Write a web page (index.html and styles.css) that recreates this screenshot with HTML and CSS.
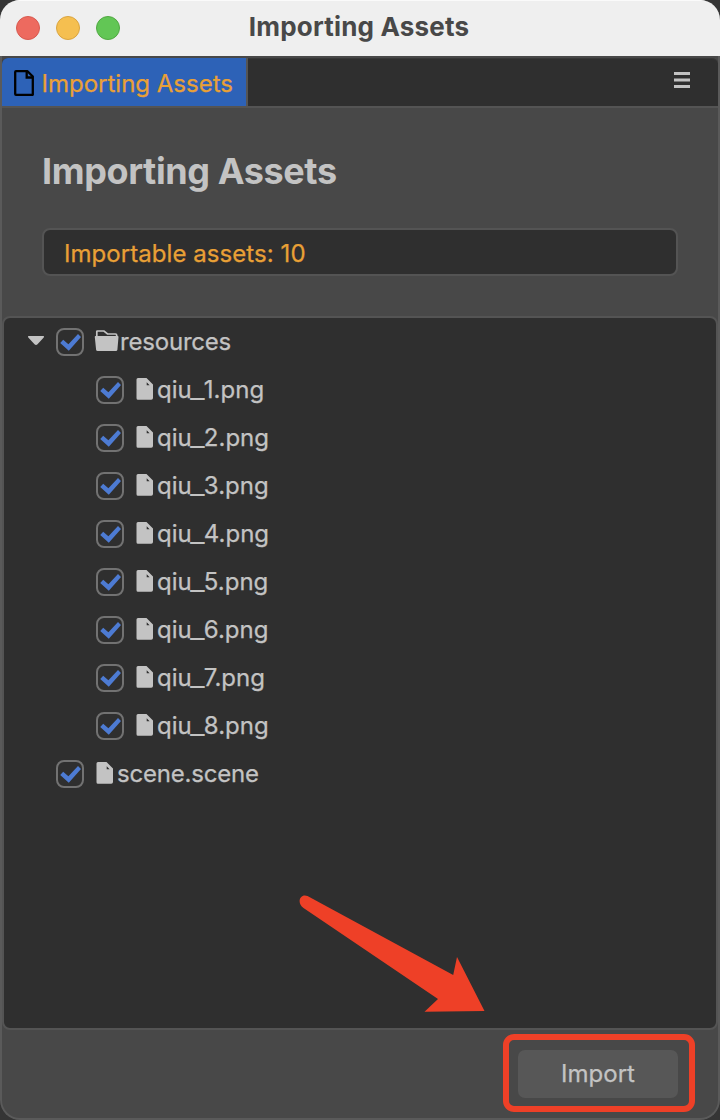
FILE: index.html
```html
<!DOCTYPE html>
<html lang="en">
<head>
<meta charset="utf-8">
<title>Importing Assets</title>
<link rel="stylesheet" href="styles.css">
</head>
<body>
<svg class="defs" aria-hidden="true">
  <symbol id="check" viewBox="0 0 28 28"><rect x="1" y="1" width="26" height="26" rx="7" fill="none" stroke="#727272" stroke-width="2"/><path d="M4.200 14.900 7.200 11.800 12.400 16.300 22 6 25 9 12.800 22.700Z" fill="#4d7bd3"/></symbol>
  <symbol id="file" viewBox="0 0 17 22"><path fill="#c3c3c3" fill-rule="evenodd" d="M2 0H10.500L17 6.500V20Q17 21.700 15.300 21.700H2Q.5 21.700 .5 20.200V1.500Q.5 0 2 0ZM10.700 4.300V7.200H13.600Z"/></symbol>
</svg>
<main class="window">
  <header class="titlebar">
    <div class="lights"><i class="light red"></i><i class="light yellow"></i><i class="light green"></i></div>
    <span class="title">Importing Assets</span>
  </header>
  <div class="body">
    <nav class="tabs">
      <div class="tab">
        <svg class="tab-icon" width="22" height="28" viewBox="0 0 22 28" fill="none" stroke="#000" stroke-width="2.300"><path d="M3 2.200H14.500L19.800 7.500V25.800H3Q2.200 25.800 2.200 25V3Q2.200 2.200 3 2.200Z" stroke-linejoin="round"/><path d="M13.700 2.500V8.500H19.500"/></svg>
        <span class="tab-label">Importing Assets</span>
      </div>
      <svg class="menu" width="16" height="16" viewBox="0 0 16 16" fill="#c3c3c3"><path d="M0 0H16V3H0ZM0 6.500H16V9.500H0ZM0 13H16V16H0Z"/></svg>
    </nav>
    <section class="summary">
      <h1>Importing Assets</h1>
      <div class="count">Importable assets: 10</div>
    </section>
    <ul class="tree">
      <li class="row root">
        <svg class="caret" width="16" height="10" viewBox="0 0 16 10"><path d="M.5 0H15.500Q16.500 .7 15.500 1.700L9.500 8.200Q8 9.600 6.500 8.200L.5 1.700Q-.5 .7 .5 0Z" fill="#c3c3c3"/></svg>
        <svg class="check"><use href="#check"/></svg>
        <svg class="folder" width="24" height="22" viewBox="0 0 24 22"><path d="M1.800 8V1.500Q1.800 1 2.300 1H9L12.500 4H20.500Q21.700 4 21.700 5.200V8" fill="none" stroke="#c3c3c3" stroke-width="1.700"/><path d="M.5 6H22.700Q23.600 6 23.500 7.100L22.400 19.700Q22.200 21 20.900 21H2.600Q1.300 21 1.100 19.700L-.2 7.100Q-.3 6 .5 6Z" fill="#c3c3c3"/></svg>
        <span class="name folder-name">resources</span>
      </li>
      <li class="row child"><svg class="check"><use href="#check"/></svg><svg class="file"><use href="#file"/></svg><span class="name">qiu<span class="underscore">_</span>1.png</span></li>
      <li class="row child"><svg class="check"><use href="#check"/></svg><svg class="file"><use href="#file"/></svg><span class="name">qiu<span class="underscore">_</span>2.png</span></li>
      <li class="row child"><svg class="check"><use href="#check"/></svg><svg class="file"><use href="#file"/></svg><span class="name">qiu<span class="underscore">_</span>3.png</span></li>
      <li class="row child"><svg class="check"><use href="#check"/></svg><svg class="file"><use href="#file"/></svg><span class="name">qiu<span class="underscore">_</span>4.png</span></li>
      <li class="row child"><svg class="check"><use href="#check"/></svg><svg class="file"><use href="#file"/></svg><span class="name">qiu<span class="underscore">_</span>5.png</span></li>
      <li class="row child"><svg class="check"><use href="#check"/></svg><svg class="file"><use href="#file"/></svg><span class="name">qiu<span class="underscore">_</span>6.png</span></li>
      <li class="row child"><svg class="check"><use href="#check"/></svg><svg class="file"><use href="#file"/></svg><span class="name">qiu<span class="underscore">_</span>7.png</span></li>
      <li class="row child"><svg class="check"><use href="#check"/></svg><svg class="file"><use href="#file"/></svg><span class="name">qiu<span class="underscore">_</span>8.png</span></li>
      <li class="row leaf"><svg class="check"><use href="#check"/></svg><svg class="file"><use href="#file"/></svg><span class="name scene">scene.scene</span></li>
    </ul>
    <footer class="footer"><div class="focus"><button class="import">Import</button></div></footer>
  </div>
  <svg class="arrow" width="190" height="120" viewBox="0 0 190 120"><path d="M8.500 2 154.200 81 158 63 185.500 117 125.500 117.700 139 105 4.500 14C-3 8.500 1.500-1 8.500 2Z" fill="#ee4027"/></svg>
</main>
</body>
</html>
```
FILE: styles.css
```css
* { box-sizing: border-box; }
body { margin: 0; background: #353535; font-family: Inter, "Liberation Sans", sans-serif; font-size: 24px; font-weight: 400; color: #c3c3c3; }
.defs { position: absolute; width: 0; height: 0; }
.window { position: relative; display: flex; flex-direction: column; width: 720px; height: 1120px; overflow: hidden; border-radius: 20px; background: #484848; }
.titlebar { display: grid; grid-template-columns: 1fr auto 1fr; align-items: center; height: 56px; padding: 0 16px; background: #efefef; border-top: 1px solid #fafafa; }
.lights { display: flex; gap: 16px; margin-top: -1px; }
.light { width: 24px; height: 24px; border-radius: 50%; }
.red { background: #ed6a5f; border: 1px solid #d75a50; }
.yellow { background: #f5bf50; border: 1px solid #d9a441; }
.green { background: #62c655; border: 1px solid #51a842; }
.title { font-size: 26px; font-weight: 700; line-height: 32px; color: #484848; letter-spacing: 0.18px; margin: -3px 2px 0 0; }
.body { flex: 1; min-height: 0; display: flex; flex-direction: column; border: 2px solid #5a5a5a; border-top: 0; border-radius: 0 0 20px 20px; }
.tabs { display: flex; align-items: center; justify-content: space-between; height: 52px; padding-right: 28px; background: #2f2f2f; border-top: 2px solid #484848; border-bottom: 2px solid #545454; border-radius: 7px 7px 0 0; box-shadow: inset 0 1px #383838; }
.tab { display: flex; align-items: center; width: 246px; height: 48px; align-self: flex-start; padding: 0 0 0 11px; background: #2d62b7; border-right: 2px solid #555; border-radius: 6px 0 0 0; color: #e9a036; }
.tab-icon { margin-top: 2px; }
.tab-label { margin: 3px 0 0 6.5px; white-space: nowrap; }
.menu { margin-top: -4px; }
.summary { height: 208px; padding: 41px 40px 0 40px; }
h1 { margin: 0; height: 45px; font-size: 36px; line-height: 44px; font-weight: 700; letter-spacing: -0.4px; }
.count { height: 48px; margin-top: 34px; padding: 2px 20px 0; line-height: 44px; background: #2f2f2f; border: 2px solid #545454; border-radius: 8px; color: #e9a036; letter-spacing: 0.06px; }
.tree { list-style: none; margin: 0; padding: 0; height: 714px; background: #2f2f2f; border: 2px solid #545454; border-radius: 8px; }
.tab-label, .count, .name, .import { -webkit-text-stroke: 0.25px currentColor; }
.row { display: flex; align-items: center; height: 48px; }
.root { padding-left: 24px; }
.child { padding-left: 92px; }
.leaf { padding-left: 52px; }
.check { flex: none; width: 28px; height: 28px; }
.caret { margin: -3px 12px 0 0; }
.folder { margin: -2px 0 0 11px; overflow: visible; }
.file { width: 17px; height: 22px; margin: -2px 4px 0 12px; }
.name { line-height: 32px; }
.folder-name, .scene { letter-spacing: -0.2px; }
.folder-name { margin-left: 1px; }
.underscore { display: inline-block; margin: 0 0.6px; transform: scaleX(1.3); }
.footer { display: flex; justify-content: flex-end; padding: 4px 23px 0 0; }
.focus { width: 192px; height: 78px; padding: 10px; border: 6px solid #ee4027; border-radius: 11px; }
.import { display: block; width: 160px; height: 48px; margin-left: -1px; padding: 0 0 2px; border: 0; border-radius: 7px; background: #575757; color: #c3c3c3; font: inherit; }
.arrow { position: absolute; left: 299px; top: 893.5px; }
```
